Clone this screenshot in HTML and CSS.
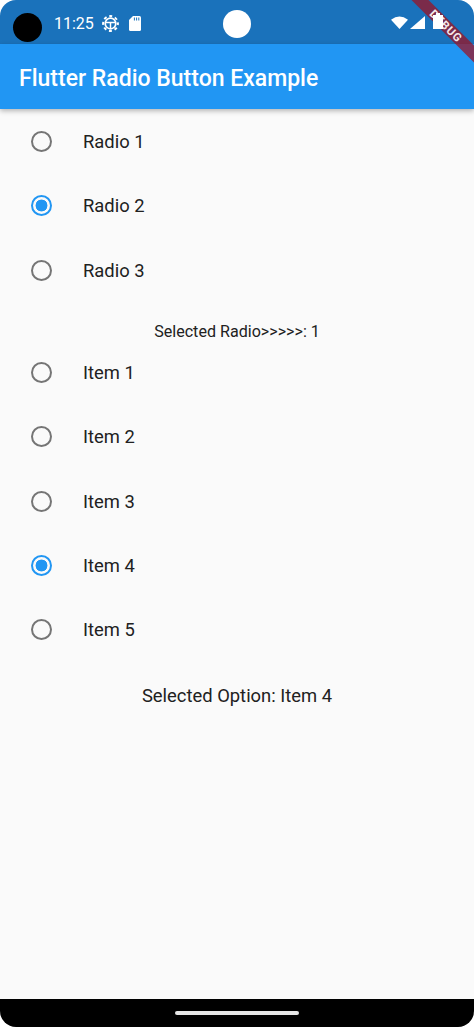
FILE: index.html
```html
<!DOCTYPE html>
<html lang="en">
<head>
    <meta charset="UTF-8">
    <meta name="viewport" content="width=device-width, initial-scale=1.0">
    <title>Flutter Radio Button Example</title>
    <link rel="stylesheet" href="styles.css">
</head>
<body>
    <div class="phone">
        <header class="status-bar">
            <span class="time">11:25</span>
            <svg class="icon-gear" viewBox="0 0 17 17" width="17" height="17">
                <circle cx="8.5" cy="8.5" r="7.4" fill="none" stroke="#fff" stroke-width="2" stroke-dasharray="3 2.81" stroke-dashoffset="1.5"/>
                <circle cx="8.5" cy="8.5" r="5.3" fill="none" stroke="#fff" stroke-width="1.7"/>
                <path d="M3 7.6h11M8.5 7.6v6" stroke="#fff" stroke-width="1.5" fill="none"/>
            </svg>
            <svg class="icon-sd" viewBox="0 0 12 15" width="12" height="15">
                <path d="M4 0H10.5Q12 0 12 1.5V13.5Q12 15 10.5 15H1.5Q0 15 0 13.5V4Z" fill="#fff"/>
                <path d="M5.4 1.5v3M7.6 1.5v3M9.8 1.5v3" stroke="#1a72bb" stroke-width="1"/>
            </svg>
            <div class="status-right">
                <svg class="icon-wifi" viewBox="0 0 17 13" width="17" height="13"><path d="M0 3.8Q8.5 -3 17 3.8L8.5 13Z" fill="#fff"/></svg>
                <svg class="icon-signal" viewBox="0 0 15 13" width="15" height="13"><path d="M15 0V13H0Z" fill="#fff"/></svg>
                <svg class="icon-battery" viewBox="0 0 10 16" width="10" height="16"><path d="M3 2V0H7V2H10V16H0V2Z" fill="#fff"/></svg>
            </div>
        </header>
        <div class="app-bar">
            <h1>Flutter Radio Button Example</h1>
        </div>
        <main class="content">
            <label class="radio-row"><span class="radio"></span>Radio 1</label>
            <label class="radio-row"><span class="radio checked"></span>Radio 2</label>
            <label class="radio-row"><span class="radio"></span>Radio 3</label>
            <p class="selected-radio">Selected Radio&gt;&gt;&gt;&gt;&gt;: 1</p>
            <label class="radio-row"><span class="radio"></span>Item 1</label>
            <label class="radio-row"><span class="radio"></span>Item 2</label>
            <label class="radio-row"><span class="radio"></span>Item 3</label>
            <label class="radio-row"><span class="radio checked"></span>Item 4</label>
            <label class="radio-row"><span class="radio"></span>Item 5</label>
            <p class="selected-option">Selected Option: Item 4</p>
        </main>
        <footer class="nav-bar"><span class="home-pill"></span></footer>

        <!-- things drawn over the app -->
        <span class="camera"></span>
        <span class="status-dot"></span>
        <div class="debug-banner">DEBUG</div>
    </div>
</body>
</html>
```

FILE: styles.css
```css
html, body {
    margin: 0;
    padding: 0;
    background: white;
}

.phone {
    position: relative;
    display: flex;
    flex-direction: column;
    width: 474px;
    height: 1027px;
    overflow: hidden;
    border-radius: 16px;
    background: #fafafa;
    font-family: Roboto, sans-serif;
    color: #212121;
}

.status-bar {
    display: flex;
    align-items: center;
    flex: 0 0 44px;
    padding: 2px 0 0 54px;
    box-sizing: border-box;
    background: #1a72bb;
    color: white;
}

.time {
    font-size: 16px;
    margin-right: 8px;
}

.icon-gear {
    margin-right: 10px;
}

.status-right {
    position: relative;
    z-index: 3;
    display: flex;
    align-items: flex-end;
    align-self: flex-start;
    margin-left: auto;
    margin-right: 31px;
    margin-top: 11px;
}

.icon-wifi {
    margin-right: 2px;
}

.icon-signal {
    margin-right: 8px;
}

.app-bar {
    flex: 0 0 65.4px;
    display: flex;
    align-items: center;
    padding-left: 19px;
    background: #2196f3;
    color: white;
    box-shadow: 0 2px 5px rgba(0, 0, 0, 0.28);
    z-index: 1;
}

.app-bar h1 {
    margin: 0;
    font-size: 23px;
    font-weight: 500;
    line-height: 1;
    position: relative;
    top: 2px;
}

.content {
    flex: 1;
}

.radio-row {
    display: flex;
    align-items: center;
    height: 64.4px;
    padding-left: 31px;
    font-size: 18.4px;
}

.radio {
    box-sizing: border-box;
    width: 21px;
    height: 21px;
    margin-right: 31px;
    border: 2.3px solid #757575;
    border-radius: 50%;
}

.radio.checked {
    border-color: #2196f3;
    background: radial-gradient(circle, #2196f3 0 5.7px, transparent 6.2px);
}

.selected-radio {
    box-sizing: border-box;
    margin: 0;
    height: 37.6px;
    padding-top: 20px;
    line-height: 18px;
    text-align: center;
    font-size: 16.1px;
}

.selected-option {
    margin: 0;
    padding-top: 23px;
    line-height: 22px;
    text-align: center;
    font-size: 18.4px;
}

.nav-bar {
    display: flex;
    justify-content: center;
    align-items: center;
    flex: 0 0 28px;
    background: black;
}

.home-pill {
    width: 124px;
    height: 4px;
    margin-bottom: 1px;
    border-radius: 2px;
    background: #e6e6e6;
}

.camera {
    position: absolute;
    left: 13px;
    top: 13px;
    width: 29px;
    height: 29px;
    border-radius: 50%;
    background: black;
}

.status-dot {
    position: absolute;
    left: 223px;
    top: 10px;
    width: 28px;
    height: 28px;
    border-radius: 50%;
    background: white;
}

.debug-banner {
    position: absolute;
    top: 20px;
    right: -42px;
    width: 140px;
    height: 12px;
    transform: rotate(45deg);
    background: rgba(160, 15, 30, 0.72);
    color: #f5e6ea;
    font-size: 11.5px;
    font-weight: 700;
    line-height: 12px;
    text-align: center;
    letter-spacing: 0.8px;
    z-index: 2;
}
```
